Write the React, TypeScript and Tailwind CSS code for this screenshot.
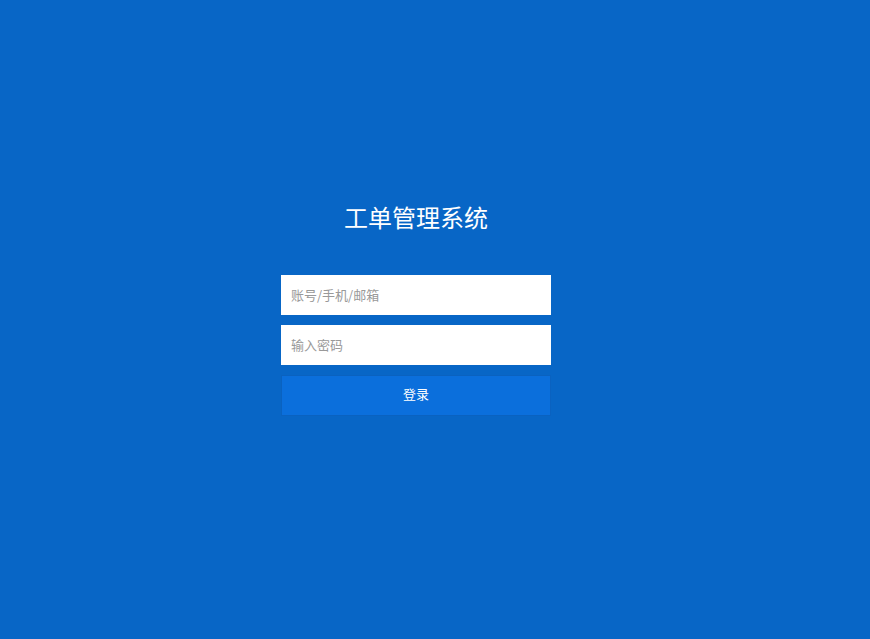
export default function App() {
  const font = { fontFamily: '"Noto Sans CJK SC", "Liberation Sans", sans-serif' };
  return (
    <div className="w-[870px] h-[639px] bg-[#0866c6] overflow-hidden" style={font}>
      <div className="ml-[281px] w-[270px] pt-[199px] flex flex-col">
        <h1 className="text-[24px] leading-[36px] text-white text-center font-normal">工单管理系统</h1>
        <div className="mt-[40px] flex flex-col gap-[10px]">
          <input
            className="h-[40px] w-full bg-white px-[10px] pb-[1px] text-[13px] text-[#333] placeholder:text-[#999] outline-none"
            placeholder="账号/手机/邮箱"
          />
          <input
            type="password"
            className="h-[40px] w-full bg-white px-[10px] pb-[1px] text-[13px] text-[#333] placeholder:text-[#999] outline-none"
            placeholder="输入密码"
          />
          <button className="h-[41px] w-full bg-[#0b6fdc] border border-[#0a62c0] pb-[3px] text-white text-[13px]">
            登录
          </button>
        </div>
      </div>
    </div>
  );
}
